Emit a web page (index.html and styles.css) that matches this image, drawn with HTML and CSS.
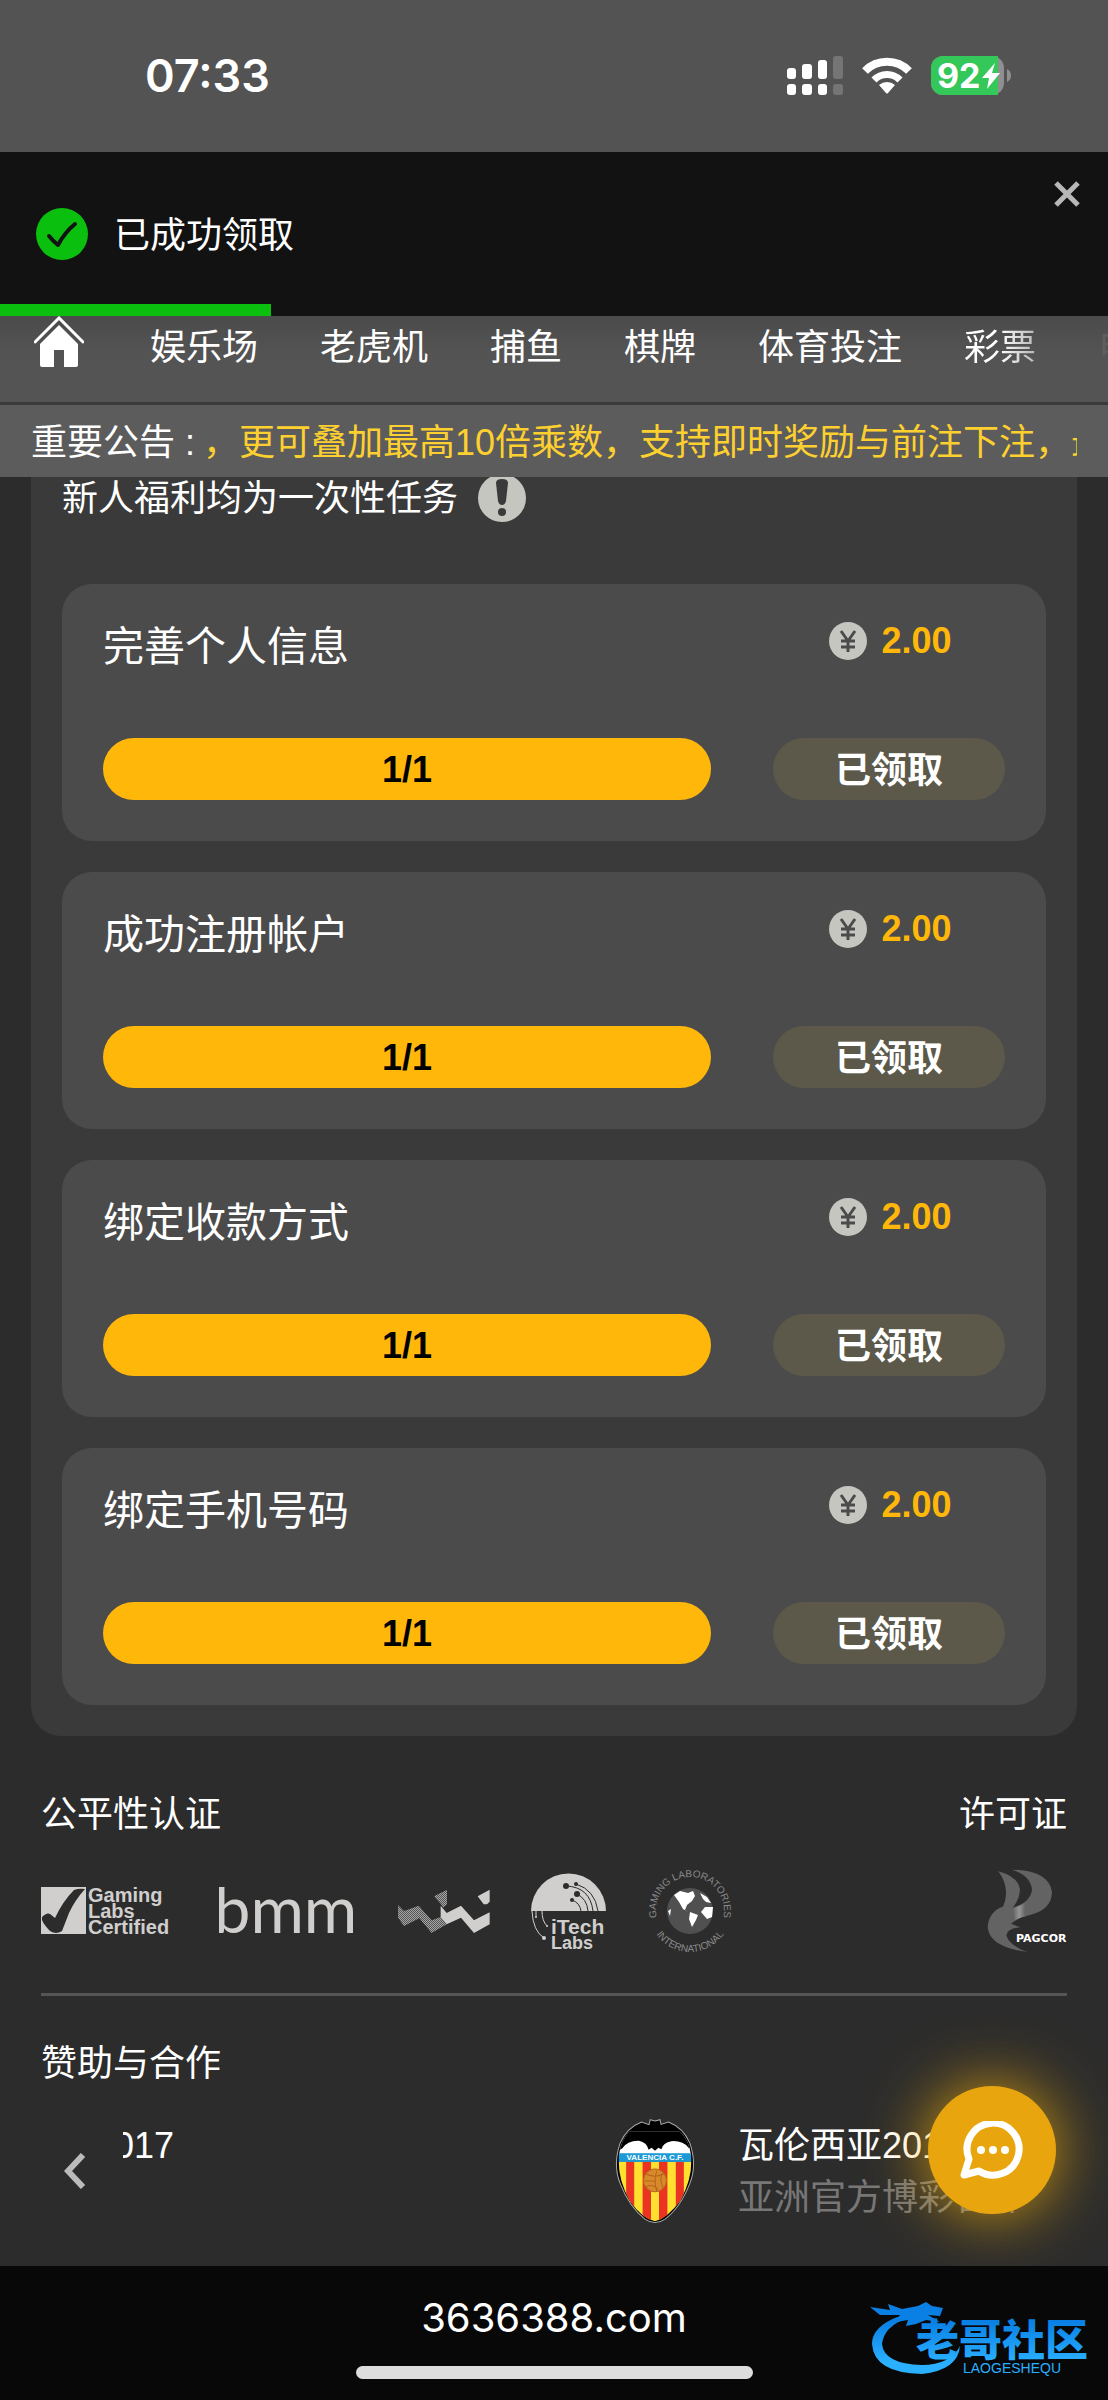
FILE: index.html
```
<!DOCTYPE html>
<html lang="zh-CN">
  <head>
    <meta charset="UTF-8" />
    <meta name="viewport" content="width=device-width, initial-scale=1.0" />
    <title>新人福利</title>
    <link rel="stylesheet" href="styles.css">
  </head>

  <body>
    <div class="status-bar">
      <span class="time">07:33</span>
      <div class="status-icons">
        <svg width="56" height="39" viewBox="0 0 56 39" fill="#fff">
          <rect x="0" y="12" width="9" height="11" rx="3" />
          <rect x="15" y="8" width="10" height="15" rx="3" />
          <rect x="31" y="4" width="9" height="19" rx="3" />
          <rect x="46" y="0" width="10" height="23" rx="3" opacity="0.2" />
          <rect x="0" y="28" width="9" height="11" rx="3" />
          <rect x="15" y="28" width="10" height="11" rx="3" />
          <rect x="31" y="28" width="9" height="11" rx="3" />
          <rect x="46" y="28" width="10" height="11" rx="3" opacity="0.2" />
        </svg>
        <svg width="50" height="37" viewBox="0 0 50 37">
          <path d="M3 14 A31 31 0 0 1 47 14" fill="none" stroke="#fff" stroke-width="8" />
          <path d="M12 23 A18 18 0 0 1 38 23" fill="none" stroke="#fff" stroke-width="7" />
          <path d="M17 28 A12 12 0 0 1 33 28 L26 36 Q25 37 24 36 Z" fill="#fff" />
        </svg>
        <svg width="80" height="39" viewBox="0 0 80 39">
          <rect width="73" height="39" rx="12" fill="#8f8f8f" />
          <path d="M12 0 H67 V39 H12 A12 12 0 0 1 0 27 V12 A12 12 0 0 1 12 0 Z" fill="#34c759" />
          <path d="M76 13 Q80 15 80 19.500 Q80 24 76 26 Z" fill="#8f8f8f" />
          <text x="6" y="32" class="battery-text">92</text>
          <path d="M64 7 L51 22 H58 L56 33 L69 17 H61 Z" fill="#fff" />
        </svg>
      </div>
    </div>

    <div class="toast" role="status">
      <svg width="52" height="52" viewBox="0 0 52 52">
        <circle cx="26" cy="26" r="26" fill="#0abf0e" />
        <path d="M13 28 Q17 33 22 37 Q29 24 39 16" fill="none" stroke="#121212" stroke-width="4" stroke-linecap="round" stroke-linejoin="round" />
      </svg>
      <span>已成功领取</span>
      <button type="button" class="toast-close" aria-label="关闭">
        <svg width="28" height="28" viewBox="0 0 28 28">
          <path d="M3 3 L25 25 M25 3 L3 25" stroke="#b8b8b8" stroke-width="5" />
        </svg>
      </button>
      <div class="toast-progress"></div>
    </div>

    <nav class="nav">
      <a href="#" class="home" aria-label="首页">
        <svg width="50" height="52" viewBox="0 0 50 52">
          <path d="M1 26 L25 2 L49 26" fill="none" stroke="#fff" stroke-width="3" stroke-linecap="round" />
          <path d="M25 9 L44 28 V49 Q44 51 42 51 H30 V34 H20 V51 H8 Q6 51 6 49 V28 Z" fill="#fff" />
        </svg>
      </a>
      <a href="#">娱乐场</a>
      <a href="#">老虎机</a>
      <a href="#">捕鱼</a>
      <a href="#">棋牌</a>
      <a href="#">体育投注</a>
      <a href="#">彩票</a>
      <a href="#">电子</a>
    </nav>

    <div class="notice">
      <span class="notice-label">重要公告 :</span>
      <div class="notice-text">，更可叠加最高10倍乘数，支持即时奖励与前注下注，最高</div>
    </div>

    <main>
      <div class="panel">
        <div class="panel-title">
          <span>新人福利均为一次性任务</span>
          <svg width="48" height="48" viewBox="0 0 48 48">
            <circle cx="24" cy="24" r="24" fill="#c6c6c0" />
            <path d="M18 9 Q18 5 24 5 Q30 5 30 9 L28 27 Q27 31 24 31 Q21 31 20 27 Z" fill="#3a3a3a" />
            <circle cx="24" cy="38" r="4" fill="#3a3a3a" />
          </svg>
        </div>

        <div class="card">
          <h3>完善个人信息</h3>
          <div class="reward">
            <svg class="coin" viewBox="0 0 38 38">
              <circle cx="19" cy="19" r="19" />
              <path d="M12 9 L19 19 L26 9 M19 19 V30 M12 19 H26 M12 25 H26" />
            </svg>
            <span>2.00</span>
          </div>
          <div class="bar">1/1</div>
          <button type="button" class="claim">已领取</button>
        </div>

        <div class="card">
          <h3>成功注册帐户</h3>
          <div class="reward">
            <svg class="coin" viewBox="0 0 38 38">
              <circle cx="19" cy="19" r="19" />
              <path d="M12 9 L19 19 L26 9 M19 19 V30 M12 19 H26 M12 25 H26" />
            </svg>
            <span>2.00</span>
          </div>
          <div class="bar">1/1</div>
          <button type="button" class="claim">已领取</button>
        </div>

        <div class="card">
          <h3>绑定收款方式</h3>
          <div class="reward">
            <svg class="coin" viewBox="0 0 38 38">
              <circle cx="19" cy="19" r="19" />
              <path d="M12 9 L19 19 L26 9 M19 19 V30 M12 19 H26 M12 25 H26" />
            </svg>
            <span>2.00</span>
          </div>
          <div class="bar">1/1</div>
          <button type="button" class="claim">已领取</button>
        </div>

        <div class="card">
          <h3>绑定手机号码</h3>
          <div class="reward">
            <svg class="coin" viewBox="0 0 38 38">
              <circle cx="19" cy="19" r="19" />
              <path d="M12 9 L19 19 L26 9 M19 19 V30 M12 19 H26 M12 25 H26" />
            </svg>
            <span>2.00</span>
          </div>
          <div class="bar">1/1</div>
          <button type="button" class="claim">已领取</button>
        </div>
      </div>
    </main>

    <footer>
      <div class="certs">
        <div>
          <h4>公平性认证</h4>
          <div class="logos">
            <!-- Gaming Labs Certified -->
            <svg width="137" height="48" viewBox="0 0 137 48" fill="#d0cfcd">
              <rect width="45" height="47" />
              <path d="M1 30 Q6 25 9 27 L14 31 Q22 14 33 3 Q38 1 44 2 Q34 13 28 26 L21 44 Q15 48 9 44 Q3 38 1 33 Z" fill="#2c2c2c" />
              <g class="gli-text">
                <text x="47" y="15">Gaming</text>
                <text x="47" y="31">Labs</text>
                <text x="47" y="47">Certified</text>
              </g>
            </svg>
            <!-- bmm -->
            <svg width="138" height="48" viewBox="0 0 138 48" fill="#d0cfcd">
              <text x="-5" y="46" class="bmm-text">bmm</text>
            </svg>
            <!-- ribbon -->
            <svg width="92" height="44" viewBox="54 144 276 132">
              <defs>
                <pattern id="dots" width="6" height="6" patternUnits="userSpaceOnUse">
                  <rect width="6" height="6" fill="#555" />
                  <path d="M0 0 H3 V3 H0 Z M3 3 H6 V6 H3 Z" fill="#a5a5a5" />
                </pattern>
              </defs>
              <path d="M54 192 L72 210 L116 194 L155 238 L182 228 L200 250 L155 276 L118 232 L72 255 L54 230 Z M162 166 L201 146 V190 L190 200 L182 188 Z" fill="url(#dots)" />
              <path d="M182 194 L200 216 L243 194 L282 238 L329 214 V250 L282 276 L243 230 L200 250 L182 228 Z M293 166 L329 146 V182 L321 190 H311 Z" fill="#d0cfcd" />
            </svg>
            <!-- iTech Labs -->
            <svg width="76" height="78" viewBox="0 0 76 78" fill="#d0cfcd">
              <path d="M0 39 A37 37 0 0 1 75 39 Z" />
              <g fill="none" stroke="#2c2c2c" stroke-width="1">
                <path d="M35 14 Q59 15 62 39 M45 12 Q64 18 67 39 M46 22 Q56 27 57 39 M41 28 Q49 31 50 39" />
              </g>
              <g fill="#2c2c2c">
                <circle cx="35" cy="14" r="3" /><circle cx="45" cy="12" r="2" /><circle cx="46" cy="22" r="3" /><circle cx="41" cy="28" r="2" />
              </g>
              <path d="M1 39 Q2 59 13 66 M5 39 V45 M11 39 Q11 49 16 54" fill="none" stroke="#d0cfcd" />
              <circle cx="13" cy="66" r="2" /><circle cx="5" cy="45" r="1" /><circle cx="16" cy="54" r="1" />
              <text x="20" y="62" class="itech-text">iTech</text>
              <text x="20" y="77" class="labs-text">Labs</text>
            </svg>
            <!-- Gaming Laboratories International -->
            <svg width="84" height="84" viewBox="0 0 84 84">
              <defs>
                <path id="arcTop" d="M42 76 A34 34 0 1 1 42 8 A34 34 0 1 1 42 76" />
                <path id="arcBottom" d="M1 42 A41 41 0 0 0 83 42" />
              </defs>
              <circle cx="42" cy="42" r="23" fill="#505050" />
              <path d="M26 26 L32 22 L40 24 L45 22 L47 27 L44 32 L39 36 L37 41 L42 44 L35 40 L31 33 Z M42 43 L50 46 L48 51 L44 58 L41 50 Z M52 24 L59 28 L63 34 L58 33 L55 30 Z M57 38 L65 38 L64 48 L59 50 L53 43 Z M20 42 L23 40 L22 47 Z" fill="#fff" />
              <text class="ring-text" text-anchor="middle"><textPath href="#arcTop" startOffset="50%">GAMING LABORATORIES</textPath></text>
              <text class="ring-text" text-anchor="middle"><textPath href="#arcBottom" startOffset="50%">INTERNATIONAL</textPath></text>
            </svg>
          </div>
        </div>
        <div class="licence">
          <h4>许可证</h4>
          <div class="logos">
            <svg width="80" height="84" viewBox="324 266 240 252">
              <defs>
                <linearGradient id="shine" x1="0" x2="1">
                  <stop offset="0" stop-color="#666" />
                  <stop offset="0.500" stop-color="#959595" />
                  <stop offset="1" stop-color="#606060" />
                </linearGradient>
              </defs>
              <path d="M358 273 Q420 290 423 330 Q422 355 403 380 L372 380 Q396 325 358 273 Z" fill="#646464" />
              <path d="M398 268 Q510 270 519 335 Q518 385 460 402 Q410 415 396 430 L424 441 Q384 445 382 465 Q390 495 445 515 Q330 500 326 440 Q330 380 402 372 L401 382 Q455 365 459 328 Q455 285 398 268 Z" fill="#636363" />
              <path d="M402 382 Q420 380 437 368 L440 408 Q420 412 408 420 Z" fill="url(#shine)" />
              <text x="411" y="486" class="pagcor-text">PAGCOR</text>
            </svg>
          </div>
        </div>
      </div>

      <div class="sponsors">
        <h4>赞助与合作</h4>
        <div class="slider">
          <button type="button" class="prev" aria-label="上一个">
            <svg width="22" height="36" viewBox="0 0 22 36">
              <path d="M19 2 L4 18 L19 34" fill="none" stroke="#bbb" stroke-width="6" />
            </svg>
          </button>
          <div class="slides">
            <div class="slide-prev"><span>2017</span></div>
            <div class="slide">
              <svg width="80" height="106" viewBox="47 55 238 316">
                <defs>
                  <clipPath id="shield">
                    <path d="M58 168 Q64 120 90 95 H240 Q268 120 274 170 Q278 235 242 300 Q205 352 166 363 Q125 352 92 303 Q54 240 58 168 Z" />
                  </clipPath>
                </defs>
                <path d="M152 60 L166 64 L181 60 L184 74 L206 67 Q250 84 270 130 Q292 195 270 250 Q240 325 195 357 Q166 376 137 357 Q90 322 62 250 Q40 195 62 130 Q82 84 126 67 L148 75 Z" fill="#000" stroke="#aaa" stroke-width="3" />
                <g clip-path="url(#shield)">
                  <rect x="50" y="90" width="230" height="75" fill="#fff" />
                  <path d="M50 60 H280 V150 L266 144 Q250 122 215 124 Q190 128 185 148 L176 144 L166 153 L156 144 L147 150 Q142 128 118 123 Q84 122 68 146 L50 156 Z" fill="#000" />
                  <rect x="50" y="160" width="230" height="26" fill="#1d9ad6" />
                  <rect x="50" y="186" width="230" height="180" fill="#ffe02e" />
                  <path d="M80 186 H104 V366 H80 Z M129 186 H154 V366 H129 Z M178 186 H203 V366 H178 Z M228 186 H252 V366 H228 Z" fill="#ea3323" />
                </g>
                <circle cx="166" cy="241" r="34" fill="#d8892a" stroke="#b5651d" stroke-width="3" />
                <path d="M140 222 Q165 235 192 222 M136 243 H168 M140 260 Q160 250 175 268 M172 212 Q160 240 172 274 M188 220 Q178 240 190 262" fill="none" stroke="#b5651d" stroke-width="3" />
                <text x="166" y="181" text-anchor="middle" class="valencia-text">VALENCIA C.F.</text>
              </svg>
              <div class="slide-text">
                <p>瓦伦西亚2017</p>
                <p class="muted">亚洲官方博彩合作</p>
              </div>
            </div>
          </div>
        </div>
        <button type="button" class="chat" aria-label="在线客服">
          <svg width="64" height="58" viewBox="0 0 64 58">
            <path d="M9 38 A26 26 0 1 1 19 50 L4 54 Z" fill="none" stroke="#fff" stroke-width="7" stroke-linejoin="round" />
            <g fill="#fff">
              <circle cx="21" cy="29" r="4" /><circle cx="33" cy="29" r="4" /><circle cx="45" cy="29" r="4" />
            </g>
          </svg>
        </button>
      </div>
    </footer>

    <div class="bottom-bar">
      <span class="url">3636388.com</span>
      <div class="indicator"></div>
      <svg class="watermark" width="224" height="80" viewBox="0 0 224 80">
        <defs>
          <linearGradient id="blue" x1="0" y1="0" x2="0" y2="80" gradientUnits="userSpaceOnUse">
            <stop offset="0.300" stop-color="#0a80e4" />
            <stop offset="0.800" stop-color="#2ab0ff" />
          </linearGradient>
        </defs>
        <g fill="url(#blue)">
          <path d="M30 18 Q2 28 2 46 Q4 75 52 76 Q88 72 90 48 Q80 67 52 67 Q14 66 12 46 Q14 28 38 20 Z" />
          <path d="M0 9 L20 12 L18 6 L32 11 L48 8 L56 4 L62 8 L73 10 L70 18 L58 17 L70 24 L56 22 L46 26 L36 28 L38 22 L26 24 L30 17 L10 17 Z" />
          <text x="46" y="58" class="wm-name">老哥社区</text>
          <text x="93" y="75" class="wm-sub">LAOGESHEQU</text>
        </g>
      </svg>
    </div>
  </body>
</html>
```
FILE: styles.css
```
body {
  margin: 0;
  font-family: "Liberation Sans", "Noto Sans CJK SC", sans-serif;
  font-size: 36px;
  line-height: 52px;
  color: #ffffff;
  background-color: #2c2c2c;
}

h3,
h4,
p {
  margin: 0;
  font-weight: normal;
}

button {
  padding: 0;
  border: none;
  background: none;
  font-family: inherit;
  cursor: pointer;
}

a {
  color: inherit;
  text-decoration: none;
}

svg {
  display: block;
  flex: none;
}

/* status bar */
.status-bar {
  display: flex;
  justify-content: space-between;
  align-items: center;
  height: 150px;
  padding: 0 97px 2px 145px;
  background-color: #535353;
}

.time {
  padding-top: 2px;
  font-family: Inter, sans-serif;
  font-size: 45px;
  font-weight: 600;
}

.status-icons {
  display: flex;
  align-items: center;
  gap: 19px;
}

.battery-text {
  font-family: Inter, sans-serif;
  font-size: 34px;
  font-weight: 700;
  fill: #ffffff;
}

/* toast */
.toast {
  position: relative;
  display: flex;
  align-items: center;
  gap: 26px;
  height: 164px;
  padding: 0 36px;
  background-color: #121212;
}

.toast span {
  padding-top: 3px;
}

.toast-close {
  position: absolute;
  top: 28px;
  right: 27px;
}

.toast-progress {
  position: absolute;
  left: 0;
  bottom: 0;
  width: 271px;
  height: 12px;
  background-color: #0abf0e;
}

/* nav */
.nav {
  display: flex;
  gap: 62px;
  height: 62px;
  padding: 6px 0 18px 34px;
  overflow: hidden;
  white-space: nowrap;
  background: linear-gradient(#4b4b4b, #545454 40px);
  border-bottom: 3px solid #3a3a3a;
}

.nav a {
  flex: none;
}

.nav .home {
  margin: -6px 4px 0 0;
}

/* last items fade out at the edge */
.nav a:nth-child(7) {
  color: transparent;
  background: linear-gradient(90deg, #ffffff 50%, #b5b5b5);
  -webkit-background-clip: text;
  background-clip: text;
}

.nav a:nth-child(8) {
  color: #5e5e5e;
}

/* notice */
.notice {
  display: flex;
  gap: 8px;
  padding: 12px 31px 8px;
  white-space: nowrap;
  background-color: #5c5c5c;
}

.notice-text {
  flex: 1;
  overflow: hidden;
  color: #fdd030;
}

/* tasks */
main {
  padding: 0 31px;
}

.panel {
  display: flex;
  flex-direction: column;
  gap: 31px;
  padding: 0 31px 31px;
  overflow: hidden;
  background-color: #3a3a3a;
  border-radius: 0 0 30px 30px;
}

.panel-title {
  display: flex;
  align-items: center;
  gap: 20px;
  height: 42px;
  margin-bottom: 34px;
}

.panel-title span {
  padding-top: 2px;
}

.card {
  display: grid;
  grid-template-columns: 1fr 232px;
  grid-template-rows: 80px 62px;
  column-gap: 62px;
  row-gap: 43px;
  padding: 31px 41px 41px;
  background-color: #4b4b4b;
  border-radius: 30px;
}

.card h3 {
  font-size: 41px;
  line-height: 64px;
}

.reward {
  display: flex;
  justify-content: center;
  align-items: center;
  gap: 14px;
  height: 52px;
  padding-left: 3px;
  color: #ffb80a;
  font-weight: bold;
}

.coin {
  width: 38px;
  height: 38px;
}

.coin circle {
  fill: #c6c6c0;
}

.coin path {
  fill: none;
  stroke: #4b4b4b;
  stroke-width: 3;
}

.bar {
  line-height: 63px;
  text-align: center;
  color: #000000;
  font-weight: bold;
  background-color: #ffb80a;
  border-radius: 31px;
}

.claim {
  padding-bottom: 4px;
  color: #ffffff;
  font-size: 36px;
  font-weight: bold;
  background-color: #5c594a;
  border-radius: 31px;
}

/* footer */
footer {
  padding: 0 41px;
}

.certs {
  display: flex;
  justify-content: space-between;
  padding: 53px 0 40px;
  border-bottom: 3px solid #555555;
}

.licence {
  text-align: right;
}

.logos {
  display: flex;
  justify-content: flex-end;
  align-items: center;
  gap: 41px;
  height: 84px;
  margin-top: 28px;
}

.gli-text {
  font-size: 20px;
  font-weight: bold;
}

.bmm-text {
  font-family: Lato, sans-serif;
  font-size: 65px;
}

.itech-text {
  font-size: 21px;
  font-weight: bold;
}

.labs-text {
  font-size: 18px;
  font-weight: bold;
}

.ring-text {
  font-size: 10px;
  fill: #8a8a8a;
}

.pagcor-text {
  font-family: "DejaVu Sans", sans-serif;
  font-size: 33px;
  font-weight: bold;
  fill: #ffffff;
}

.valencia-text {
  font-size: 24px;
  font-weight: bold;
  fill: #ffffff;
}

.sponsors {
  position: relative;
  height: 228px;
  padding-top: 42px;
}

.slider {
  display: flex;
  margin-top: 28px;
}

.prev {
  width: 22px;
  margin: 0 37px 0 23px;
}

.slides {
  flex: 1;
  display: flex;
  justify-content: space-between;
  align-items: center;
  overflow: hidden;
}

/* slide that has scrolled off to the left */
.slide-prev {
  display: flex;
  justify-content: flex-end;
  align-self: flex-start;
  width: 51px;
  padding-top: 2px;
  overflow: hidden;
}

.slide {
  display: flex;
  align-items: center;
  gap: 43px;
}

.slide-text {
  width: 329px;
  padding-top: 2px;
  white-space: nowrap;
}

.muted {
  color: #777777;
}

.chat {
  position: absolute;
  right: 11px;
  top: 90px;
  display: flex;
  justify-content: center;
  align-items: center;
  width: 128px;
  height: 128px;
  background-color: #e8a50d;
  border-radius: 50%;
  box-shadow: 0 0 64px rgba(255, 184, 10, 0.8);
}

.bottom-bar {
  position: relative;
  display: flex;
  flex-direction: column;
  align-items: center;
  gap: 22px;
  padding: 26px 0 21px;
  background-color: #080808;
}

.url {
  font-family: Inter, sans-serif;
  font-size: 40px;
}

.indicator {
  width: 397px;
  height: 13px;
  background-color: #dddddd;
  border-radius: 7px;
}

.watermark {
  position: absolute;
  top: 32px;
  right: 14px;
}

.wm-name {
  font-size: 43px;
  font-weight: 900;
}

.wm-sub {
  font-size: 14px;
}
```
